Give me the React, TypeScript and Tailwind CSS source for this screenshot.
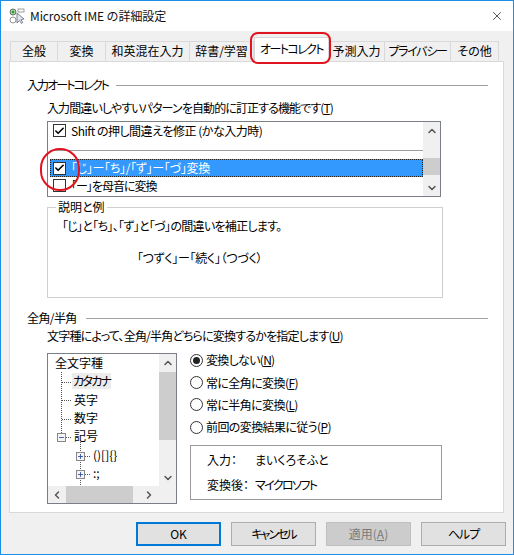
import type { ReactNode } from 'react'
import { ChevronUp, ChevronDown, ChevronLeft, ChevronRight, X, Check, Plus, Minus } from 'lucide-react'

const tabs = [
  { label: '全般', width: 'w-[48px]' },
  { label: '変換', width: 'w-[48px]' },
  { label: '和英混在入力', width: 'w-[84px]' },
  { label: '辞書/学習', width: 'w-[64px]' },
  { label: 'オートコレクト', width: 'w-[75px] tracking-[-1.6px]', active: true },
  { label: '予測入力', width: 'w-[56px]' },
  { label: 'プライバシー', width: 'w-[66px] tracking-[-1.3px]' },
  { label: 'その他', width: 'w-[48px]' },
]

function Mnemonic({ text, hotkey, className = '' }: { text: string; hotkey: string; className?: string }) {
  return (
    <span className={`whitespace-nowrap ${className}`}>
      {text}(<span className="underline">{hotkey}</span>)
    </span>
  )
}

function CheckBox({ checked }: { checked?: boolean }) {
  return (
    <span className="w-[13px] h-[13px] shrink-0 border border-[#333] bg-white flex items-center justify-center">
      {checked && <Check className="w-[12px] h-[12px] text-black" strokeWidth={3.5} />}
    </span>
  )
}

function Radio({ label, hotkey, checked, tracking }: { label: string; hotkey: string; checked?: boolean; tracking: string }) {
  return (
    <div className="h-[22.4px] flex items-center gap-[3px]">
      <span className="w-[13px] h-[13px] rounded-full border border-[#333] bg-white flex items-center justify-center">
        {checked && <span className="w-[7px] h-[7px] rounded-full bg-[#222]" />}
      </span>
      <Mnemonic text={label} hotkey={hotkey} className={tracking} />
    </div>
  )
}

function SectionTitle({ title, lineClass }: { title: string; lineClass: string }) {
  return (
    <div className="flex items-center h-[18px] pl-[17px] pr-[15px]">
      <span className={`whitespace-nowrap ${lineClass}`}>{title}</span>
      <div className="flex-1 h-px bg-[#a0a0a0]" />
    </div>
  )
}

function ScrollArrow({ children, className = '' }: { children: ReactNode; className?: string }) {
  return <div className={`flex items-center justify-center text-[#555] shrink-0 ${className}`}>{children}</div>
}

function TreeRow({ label, indent, highlight }: { label: string; indent: string; highlight?: boolean }) {
  return (
    <div className={`h-[18.3px] flex items-center whitespace-nowrap ${indent}`}>
      <span className={highlight ? 'bg-[#ececec] px-px tracking-[-1.7px]' : 'px-px'}>{label}</span>
    </div>
  )
}

function TreeBox({ top, left, plus }: { top: string; left: string; plus?: boolean }) {
  return (
    <span className={`absolute ${top} ${left} w-[9px] h-[9px] border border-[#888] bg-[#f4f4f4] flex items-center justify-center text-[#2f4f9f]`}>
      {plus ? <Plus className="w-[7px] h-[7px]" strokeWidth={3} /> : <Minus className="w-[7px] h-[7px]" strokeWidth={3} />}
    </span>
  )
}

function DialogButton({ label, primary, disabled, className = '' }: { label: ReactNode; primary?: boolean; disabled?: boolean; className?: string }) {
  const tone = primary
    ? 'border-2 border-[#0078d7] bg-[#e1e1e1] text-black'
    : disabled
      ? 'border border-[#bfbfbf] bg-[#cccccc] text-[#7a7a7a]'
      : 'border border-[#adadad] bg-[#e1e1e1] text-black'
  return <div className={`w-[85px] h-[24px] flex items-center justify-center ${tone} ${className}`}>{label}</div>
}

export default function App() {
  return (
    <div className="relative w-[514px] h-[555px] overflow-hidden flex flex-col bg-[#f0f0f0] border border-[#1b8fe8] text-[12px] leading-[16px] text-black font-['Noto_Sans_CJK_JP',sans-serif] [font-feature-settings:'palt']">
      {/* Title bar */}
      <div className="h-[30px] shrink-0 bg-white flex items-center pl-[8px] pr-[9px]">
        <svg width="16" height="16" viewBox="0 0 16 16" className="shrink-0">
          <circle cx="4" cy="4" r="3" fill="#9fd59f" stroke="#555" strokeWidth="0.8" />
          <circle cx="4" cy="4" r="1.2" fill="#2d9a2d" />
          <circle cx="4" cy="12" r="3" fill="none" stroke="#777" strokeWidth="0.8" />
          <rect x="9" y="1" width="6" height="3" fill="none" stroke="#888" strokeWidth="0.8" />
          <path d="M8 5 L8 15 L10.5 12.5 L12.5 15.5 L13.8 14.5 L12 11.5 L15 11 Z" fill="#dfe6f0" stroke="#667" strokeWidth="0.8" />
        </svg>
        <span className="ml-[5px] text-[12px] [font-feature-settings:normal] tracking-[-0.1px] text-[#111] whitespace-nowrap">Microsoft IME の詳細設定</span>
        <X className="ml-auto w-[14px] h-[14px] text-[#222]" strokeWidth={1.3} />
      </div>

      {/* Tabs */}
      <div className="h-[30px] shrink-0 flex items-end pl-[9px] relative z-10">
        {tabs.map((tab) =>
          tab.active ? (
            <div key={tab.label} className={`${tab.width} h-[25px] -mb-px pb-[2px] whitespace-nowrap bg-white border border-b-0 border-[#d9d9d9] flex items-center justify-center`}>
              {tab.label}
            </div>
          ) : (
            <div key={tab.label} className={`${tab.width} h-[20px] pb-[1px] whitespace-nowrap bg-[#f0f0f0] border border-b-0 border-l-0 first:border-l border-[#d9d9d9] flex items-center justify-center`}>
              {tab.label}
            </div>
          ),
        )}
      </div>

      {/* Panel */}
      <div className="ml-[8px] mr-[9px] h-[452px] shrink-0 bg-white border border-[#d9d9d9] pt-[14px]">
        <SectionTitle title="入力オートコレクト" lineClass="w-[89px] tracking-[-1.9px]" />

        <div className="mt-[6px] ml-[37px]"><Mnemonic text="入力間違いしやすいパターンを自動的に訂正する機能です" hotkey="T" className="tracking-[-0.9px]" /></div>

        <div className="mt-[5px] ml-[37px] w-[394px] h-[76px] border border-[#7a7f85] flex">
          <div className="flex-1 min-w-0 pl-[2px]">
            <div className="h-[17px] flex items-center gap-[5px] pl-[3px]">
              <CheckBox checked />
              <span className="whitespace-nowrap tracking-[-0.5px]">Shift の押し間違えを修正 (かな入力時)</span>
            </div>
            <div className="h-[12px] border-b border-[#a09aa0]" />
            <div className="h-[18px] mt-[8px] flex items-center gap-[5px] pl-[3px] bg-[#3399ff] text-white outline-1 -outline-offset-1 outline-dotted outline-[#222]">
              <CheckBox checked />
              <span className="whitespace-nowrap tracking-[-0.3px]">「じ」ー「ち」/「ず」ー「づ」変換</span>
            </div>
            <div className="h-[17px] flex items-center gap-[5px] pl-[3px]">
              <CheckBox />
              <span className="whitespace-nowrap tracking-[-1px]">「ー」を母音に変換</span>
            </div>
          </div>
          <div className="w-[17px] shrink-0 bg-[#f0f0f0] flex flex-col">
            <ScrollArrow className="h-[17px]"><ChevronUp className="w-[12px] h-[12px]" strokeWidth={3} /></ScrollArrow>
            <div className="flex-1 pt-[19px]"><div className="h-[17px] bg-[#cdcdcd]" /></div>
            <ScrollArrow className="h-[17px]"><ChevronDown className="w-[12px] h-[12px]" strokeWidth={3} /></ScrollArrow>
          </div>
        </div>

        {/* 説明と例 */}
        <div className="relative mt-[10px] ml-[37px] w-[396px] h-[91px] border border-[#cfcfcf] pl-[14px] pt-[10px]">
          <span className="absolute -top-[9px] left-[8px] bg-white px-[2px]">説明と例</span>
          <div className="whitespace-nowrap tracking-[-0.7px]">「じ」と「ち」、「ず」と「づ」の間違いを補正します。</div>
          <div className="mt-[16px] pl-[75px] whitespace-nowrap tracking-[-0.3px]">「つずく」ー「続く」（つづく）</div>
        </div>

        <div className="mt-[11px]">
          <SectionTitle title="全角/半角" lineClass="w-[59px] tracking-[-0.6px]" />
        </div>

        <div className="mt-[1px] ml-[37px]"><Mnemonic text="文字種によって、全角/半角どちらに変換するかを指定します" hotkey="U" className="tracking-[-0.8px]" /></div>

        <div className="mt-[9px] ml-[37px] flex items-start">
          {/* Tree */}
          <div className="w-[130px] h-[151px] shrink-0 border border-[#7a7f85] flex flex-col">
            <div className="flex-1 min-h-0 flex">
              <div className="relative flex-1 overflow-hidden">
                <svg width="111" height="133" className="absolute left-0 top-0">
                  <g stroke="#555" strokeDasharray="1 1" fill="none">
                    <path d="M13.5 18 V80" />
                    <path d="M14 28.5 H23 M14 46.5 H23 M14 65.5 H23 M18 83.5 H23" />
                    <path d="M32.5 88 V133" />
                    <path d="M37 102.5 H43 M37 120.5 H43" />
                  </g>
                </svg>
                <TreeBox top="top-[79px]" left="left-[9px]" />
                <TreeBox top="top-[98px]" left="left-[28px]" plus />
                <TreeBox top="top-[116px]" left="left-[28px]" plus />
                <div className="relative">
                  <TreeRow label="全文字種" indent="pl-[6px]" />
                  <TreeRow label="カタカナ" indent="pl-[24px]" highlight />
                  <TreeRow label="英字" indent="pl-[25px]" />
                  <TreeRow label="数字" indent="pl-[25px]" />
                  <TreeRow label="記号" indent="pl-[25px]" />
                  <TreeRow label="()[]{}" indent="pl-[44px]" />
                  <TreeRow label=":;" indent="pl-[44px]" />
                  <TreeRow label={'\'"!?.,\\/~'} indent="pl-[44px]" />
                </div>
              </div>
              <div className="w-[17px] shrink-0 bg-[#f0f0f0] flex flex-col">
                <ScrollArrow className="h-[18px]"><ChevronUp className="w-[12px] h-[12px]" strokeWidth={3} /></ScrollArrow>
                <div className="h-[68px] bg-[#cdcdcd]" />
                <div className="flex-1" />
                <ScrollArrow className="h-[17px]"><ChevronDown className="w-[12px] h-[12px]" strokeWidth={3} /></ScrollArrow>
              </div>
            </div>
            <div className="h-[17px] shrink-0 bg-[#f0f0f0] flex">
              <ScrollArrow className="w-[18px]"><ChevronLeft className="w-[12px] h-[12px]" strokeWidth={3} /></ScrollArrow>
              <div className="w-[67px] bg-[#cdcdcd]" />
              <div className="flex-1" />
              <ScrollArrow className="w-[35px] justify-start pl-[2px]"><ChevronRight className="w-[12px] h-[12px]" strokeWidth={3} /></ScrollArrow>
            </div>
          </div>

          {/* Radios */}
          <div className="ml-[13px] flex-1 -mt-[4px]">
            <Radio label="変換しない" hotkey="N" checked tracking="tracking-[-0.7px]" />
            <Radio label="常に全角に変換" hotkey="F" tracking="tracking-[-0.6px]" />
            <Radio label="常に半角に変換" hotkey="L" tracking="tracking-[-0.6px]" />
            <Radio label="前回の変換結果に従う" hotkey="P" tracking="tracking-[-0.6px]" />
            <div className="mt-[6px] w-[252px] h-[55px] border border-[#9a9a9a] pl-[16px] pt-[6px] flex flex-col gap-[9px]">
              <div className="flex"><span className="w-[48px]">入力：</span><span>まいくろそふと</span></div>
              <div className="flex"><span className="w-[48px]">変換後：</span><span className="tracking-[-1.6px]">マイクロソフト</span></div>
            </div>
          </div>
        </div>
      </div>

      {/* Buttons */}
      <div className="mt-[9px] pl-[135px] flex gap-[10px]">
        <DialogButton label="OK" primary />
        <DialogButton label="キャンセル" className="tracking-[-2px]" />
        <DialogButton label={<Mnemonic text="適用" hotkey="A" />} disabled />
        <DialogButton label="ヘルプ" className="tracking-[-1px]" />
      </div>

      {/* Red annotations */}
      <div className="absolute left-[249px] top-[31px] w-[81px] h-[32px] border-2 border-[#e0141e] rounded-[8px] z-20" />
      <div className="absolute left-[39px] top-[147px] w-[40px] h-[43px] border-2 border-[#e0141e] rounded-full z-20" />
    </div>
  )
}
